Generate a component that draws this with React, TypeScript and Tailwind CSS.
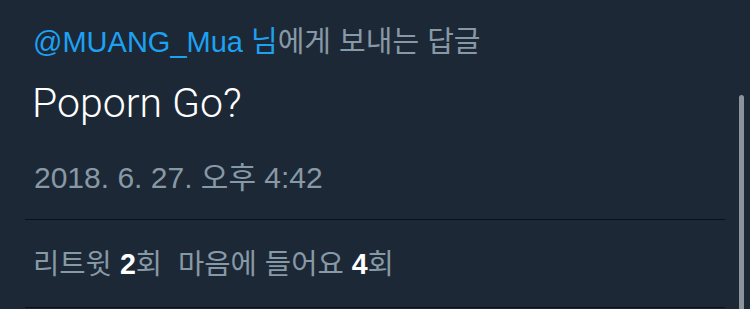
import React from 'react'

const sans = "font-['Liberation_Sans','Noto_Sans_CJK_KR',sans-serif]"

const TweetDetail = () => {
  return (
    <div className="relative w-[750px] h-[309px] overflow-hidden bg-[#1c2836]">
      <div className={`flex flex-col pt-[26px] ${sans}`}>
        <div className="pl-[33px] text-[29px] leading-[33px] whitespace-nowrap text-[#8899a6]">
          <span className="text-[#1da1f2]">@MUANG_Mua 님</span>에게 보내는 답글
        </div>
        <div className="mt-[20px] pl-[32px] text-[41px] leading-[48px] font-light font-['Roboto',sans-serif] text-white">
          Poporn Go?
        </div>
        <div className="mt-[34px] pl-[34px] text-[30px] leading-[34px] text-[#8899a6] whitespace-nowrap">
          2018. 6. 27. 오후 4:42
        </div>
        <div className="mt-[24px] mx-[25px] h-px bg-[#0c1117]" />
        <div className="mt-[28px] pl-[33px] text-[28.6px] leading-[32px] text-[#8899a6] whitespace-nowrap">
          리트윗 <b className="text-white">2</b>회&nbsp;&nbsp;마음에 들어요 <b className="text-white">4</b>회
        </div>
        <div className="mt-[27px] mx-[25px] h-px bg-[#0c1117]" />
      </div>
      {/* scroll indicator */}
      <div className="absolute left-[739px] top-[95px] w-[5px] h-[240px] rounded-full bg-[#8a949d]" />
    </div>
  )
}

export default function App() {
  return <TweetDetail />
}
